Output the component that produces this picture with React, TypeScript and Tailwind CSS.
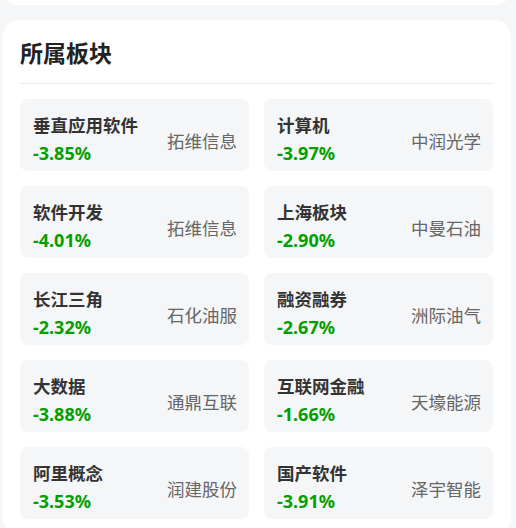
const sectors = [
  { name: '垂直应用软件', change: '-3.85%', stock: '拓维信息' },
  { name: '计算机', change: '-3.97%', stock: '中润光学' },
  { name: '软件开发', change: '-4.01%', stock: '拓维信息' },
  { name: '上海板块', change: '-2.90%', stock: '中曼石油' },
  { name: '长江三角', change: '-2.32%', stock: '石化油服' },
  { name: '融资融券', change: '-2.67%', stock: '洲际油气' },
  { name: '大数据', change: '-3.88%', stock: '通鼎互联' },
  { name: '互联网金融', change: '-1.66%', stock: '天壕能源' },
  { name: '阿里概念', change: '-3.53%', stock: '润建股份' },
  { name: '国产软件', change: '-3.91%', stock: '泽宇智能' },
]

export default function App() {
  return (
    <div
      className="h-[528px] overflow-hidden bg-[#f5f6f8] pl-[3px] pr-[5px]"
      style={{ fontFamily: '"Noto Sans", "Noto Sans CJK SC", sans-serif' }}
    >
      <div className="-mt-[20px] h-[25px] rounded-b-[16px] bg-white" />
      <div className="mt-[15px] rounded-[16px] bg-white pb-4 pl-[17px] pr-[18px] pt-[17px]">
        <h2 className="pb-[14px] text-[23px] font-bold leading-[32px] text-[#222]">
          所属板块
        </h2>
        <div className="border-t border-[#e8e9eb]" />
        <div className="mt-[15px] grid grid-cols-2 gap-[15px]">
          {sectors.map((s) => (
            <div
              key={s.name}
              className="flex h-[72px] justify-between rounded-[8px] bg-[#f5f6f7] pl-[13px] pr-[12px]"
            >
              <div className="flex flex-col pt-[12px]">
                <span className="text-[17.5px] font-bold leading-[28px] text-[#333]">
                  {s.name}
                </span>
                <span className="text-[18px] font-bold leading-[29px] text-[#00a000]">
                  {s.change}
                </span>
              </div>
              <span className="self-center pt-[11px] text-[17.5px] leading-[28px] text-[#666]">
                {s.stock}
              </span>
            </div>
          ))}
        </div>
      </div>
    </div>
  )
}
